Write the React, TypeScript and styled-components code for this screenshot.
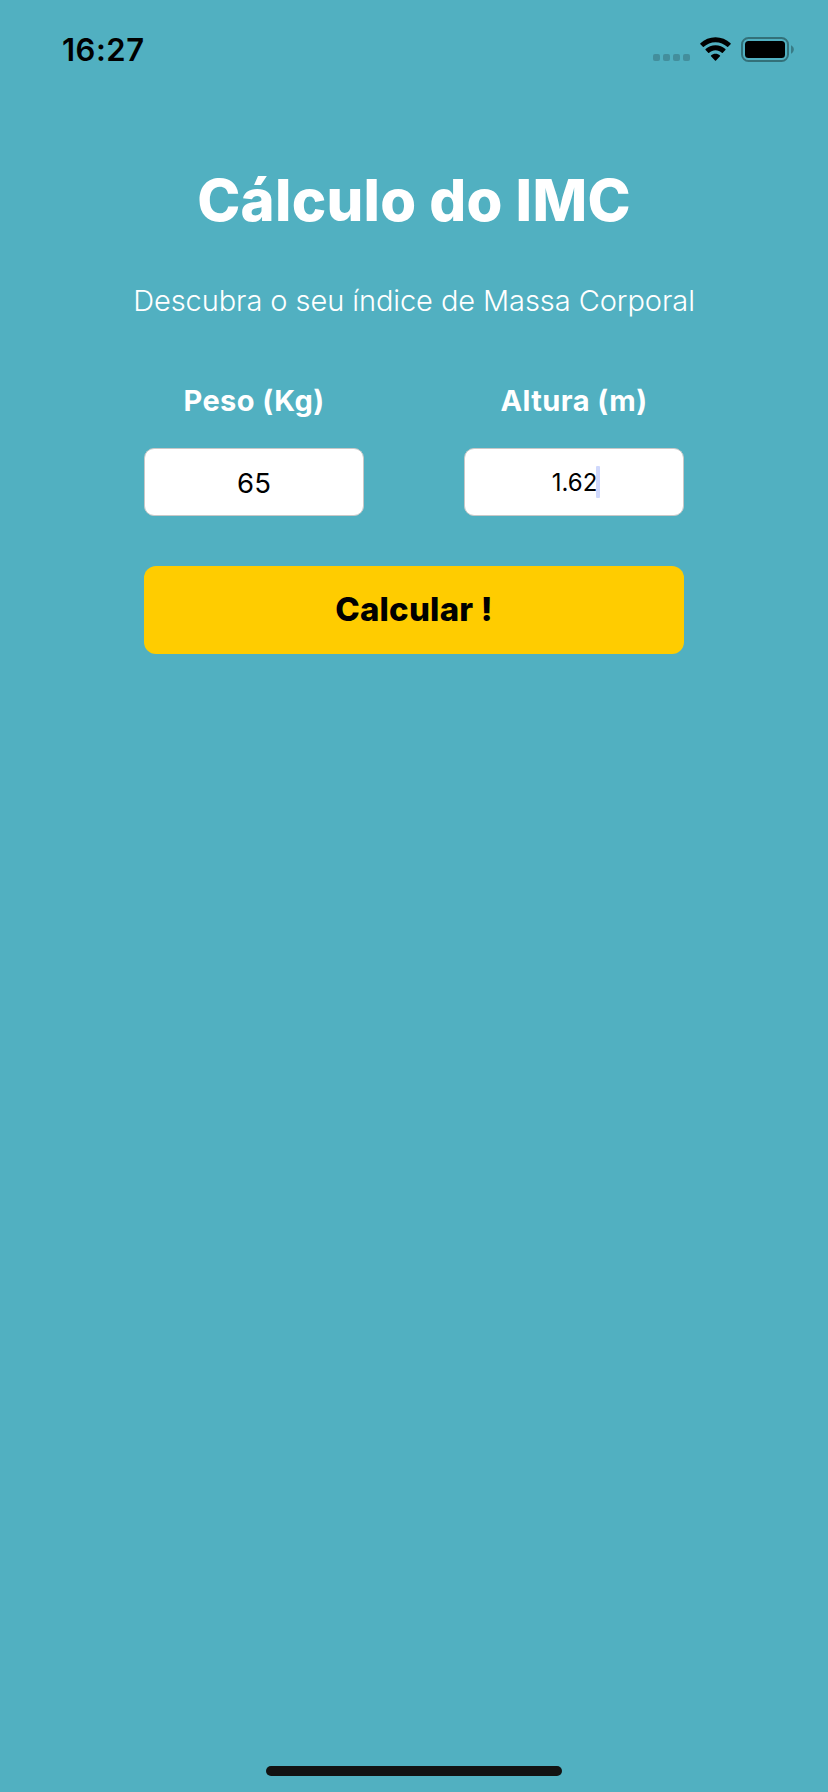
import React, { useState } from "react";
import styled, { createGlobalStyle } from "styled-components";

const GlobalStyle = createGlobalStyle`
  *, *::before, *::after { box-sizing: border-box; }
  body { margin: 0; background: #51b0c1; font-family: Inter, "Liberation Sans", sans-serif; }
`;

const Screen = styled.div`
  display: flex;
  flex-direction: column;
  align-items: center;
  width: 828px;
  height: 1792px;
  background: #51b0c1;
  overflow: hidden;
`;

const StatusBar = styled.header`
  display: flex;
  justify-content: space-between;
  width: 100%;
  height: 88px;
  padding: 30px 33px 0 62px;
`;

const Clock = styled.time`
  font-size: 31px;
  line-height: 40px;
  font-weight: 600;
  letter-spacing: 0.5px;
  color: #000;
`;

const Indicators = styled.div`
  display: flex;
  align-items: flex-start;
  padding-top: 7px;
`;

const SignalDots = styled.div`
  display: flex;
  gap: 3px;
  margin: 17px 9px 0 0;
`;

const Dot = styled.span`
  width: 7px;
  height: 7px;
  border-radius: 2px;
  background: #438e9c;
`;

const WifiIcon = styled.svg`
  width: 33px;
  height: 25px;
  margin-right: 9px;
`;

const BatteryIcon = styled.svg`
  width: 54px;
  height: 25px;
`;

const Title = styled.h1`
  margin: 76px 0 0;
  font-size: 58px;
  line-height: 72px;
  font-weight: 800;
  letter-spacing: 0.25px;
  color: #fff;
  white-space: nowrap;
`;

const Subtitle = styled.p`
  margin: 47px 0 0;
  font-size: 29px;
  line-height: 36px;
  font-weight: 300;
  letter-spacing: -0.08px;
  color: #fff;
  white-space: nowrap;
`;

const Form = styled.form`
  display: flex;
  flex-direction: column;
  gap: 50px;
  width: 540px;
  margin-top: 64px;
`;

const Fields = styled.div`
  display: flex;
  justify-content: space-between;
`;

const Field = styled.label`
  display: flex;
  flex-direction: column;
  align-items: center;
  gap: 29px;
  width: 220px;
`;

const FieldName = styled.span`
  font-size: 29px;
  line-height: 36px;
  font-weight: 700;
  letter-spacing: 0.45px;
  color: #fff;
  white-space: nowrap;
`;

const ValueBox = styled.span<{ $size: number }>`
  display: flex;
  align-items: center;
  justify-content: center;
  width: 100%;
  height: 68px;
  padding-top: 2px;
  border: 1px solid #c8c8c8;
  border-radius: 10px;
  background: #fff;
  color: #000;
  font-size: ${(p) => p.$size}px;
  line-height: 36px;
`;

const Caret = styled.i`
  width: 4px;
  height: 32px;
  margin: -2px -4px 0 -1px;
  border-radius: 1px;
  background: #cfd8fc;
`;

const SubmitButton = styled.button`
  width: 100%;
  height: 88px;
  padding: 0 0 2px;
  border: 0;
  border-radius: 12px;
  background: #ffcc00;
  color: #000;
  font: 800 33px/40px Inter, "Liberation Sans", sans-serif;
  letter-spacing: 0.2px;
`;

const HomeIndicator = styled.div`
  width: 296px;
  height: 10px;
  margin-top: auto;
  margin-bottom: 16px;
  border-radius: 5px;
  background: #121212;
`;

export default function App() {
  const [values] = useState({ peso: "65", altura: "1.62" });
  return (
    <>
      <GlobalStyle />
      <Screen>
        <StatusBar>
          <Clock>16:27</Clock>
          <Indicators>
            <SignalDots>
              <Dot />
              <Dot />
              <Dot />
              <Dot />
            </SignalDots>
            <WifiIcon viewBox="0 0 33 25">
              <path d="M16.5 5.2c4.5 0 8.600 1.700 11.700 4.600.3.300.6.300.9 0l2.500-2.500c.3-.3.300-.7 0-1C27.500 2.500 22.200.3 16.500.3S5.500 2.500 1.400 6.300c-.3.300-.3.700 0 1l2.500 2.500c.3.300.6.300.9 0C7.900 6.900 12 5.200 16.500 5.200Z" />
              <path d="M16.500 13.300c2.400 0 4.600.9 6.300 2.400.3.300.7.300 1 0l2.600-2.600c.3-.3.300-.7 0-1-2.600-2.400-6.100-3.800-9.900-3.800s-7.300 1.400-9.900 3.800c-.3.300-.3.700 0 1l2.600 2.600c.3.300.7.300 1 0 1.700-1.500 3.900-2.400 6.300-2.400Z" />
              <path d="M16.500 16.800c1.700 0 3.300.6 4.500 1.600.3.300.3.600 0 .9l-4 4.200c-.3.300-.7.300-1 0l-4-4.200c-.3-.3-.3-.6 0-.9 1.200-1 2.800-1.600 4.500-1.600Z" />
            </WifiIcon>
            <BatteryIcon viewBox="0 0 54 25">
              <rect x="1" y="1" width="46" height="23" rx="6.500" fill="none" stroke="#337079" strokeWidth="2" />
              <rect x="4" y="4" width="40" height="17" rx="3.500" />
              <path d="M50 8.300c1.700.7 2.800 2.300 2.800 4.200s-1.100 3.500-2.800 4.200Z" fill="#387b86" />
            </BatteryIcon>
          </Indicators>
        </StatusBar>
        <Title>Cálculo do IMC</Title>
        <Subtitle>Descubra o seu índice de Massa Corporal</Subtitle>
        <Form>
          <Fields>
            <Field>
              <FieldName>Peso (Kg)</FieldName>
              <ValueBox $size={27.5}>{values.peso}</ValueBox>
            </Field>
            <Field>
              <FieldName>Altura (m)</FieldName>
              <ValueBox $size={24}>
                {values.altura}
                <Caret />
              </ValueBox>
            </Field>
          </Fields>
          <SubmitButton type="button">Calcular !</SubmitButton>
        </Form>
        <HomeIndicator />
      </Screen>
    </>
  );
}
